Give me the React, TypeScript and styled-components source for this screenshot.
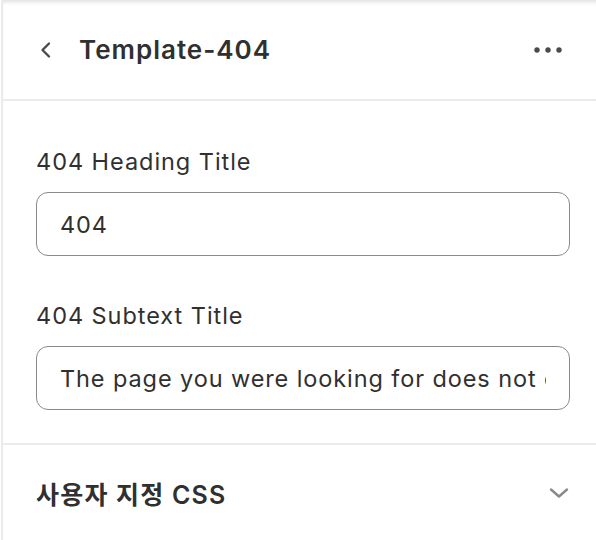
import styled, { createGlobalStyle } from 'styled-components';

const GlobalStyle = createGlobalStyle`
  html, body {
    margin: 0;
    padding: 0;
    background: #ffffff;
  }
  body {
    font-family: Inter, "Noto Sans CJK KR", sans-serif;
    color: #303030;
  }
`;

const Panel = styled.div`
  width: 596px;
  height: 540px;
  box-sizing: border-box;
  margin-left: 1px;
  border-left: 2px solid #ebebeb;
  display: flex;
  flex-direction: column;
  overflow: hidden;
`;

const Header = styled.header`
  height: 99px;
  flex-shrink: 0;
  display: flex;
  align-items: center;
  padding: 0 35px 0 32px;
  border-bottom: 2px solid #ebebeb;
  box-shadow: inset 0 4px 4px -2px rgba(0, 0, 0, 0.13);
`;

const IconButton = styled.button`
  border: none;
  background: none;
  padding: 0;
  display: flex;
  align-items: center;
  justify-content: center;
  color: #4a4a4a;
  cursor: pointer;
`;

const Title = styled.h1`
  margin: 0 0 0 22px;
  flex: 1;
  font-size: 26px;
  font-weight: 600;
  letter-spacing: 1px;
  color: #303030;
`;

const Fields = styled.div`
  display: flex;
  flex-direction: column;
  gap: 44px;
  padding: 45px 27px 33px 33px;
  border-bottom: 2px solid #ebebeb;
`;

const Field = styled.label`
  display: flex;
  flex-direction: column;
  gap: 14px;
`;

const LabelText = styled.span`
  font-size: 23.5px;
  line-height: 32px;
  letter-spacing: 0.95px;
  color: #303030;
`;

const TextInput = styled.input`
  box-sizing: border-box;
  height: 64px;
  width: 100%;
  border: 1px solid #8a8a8a;
  border-radius: 12px;
  padding: 0 23px;
  font-family: inherit;
  font-size: 23.5px;
  letter-spacing: 0.9px;
  color: #303030;
  background: #fff;
  outline: none;
`;

const Section = styled.div`
  flex: 1;
  display: flex;
  align-items: center;
  justify-content: space-between;
  padding: 0 27px 0 33px;
`;

const SectionTitle = styled.h2`
  margin: 0;
  font-size: 25px;
  font-weight: 600;
  letter-spacing: 1.2px;
  color: #303030;
`;

export default function App() {
  return (
    <>
      <GlobalStyle />
      <Panel>
        <Header>
          <IconButton aria-label="Back">
            <svg width="22" height="22" viewBox="0 0 22 22" fill="none">
              <path d="M14 4.5 L7.5 11 L14 17.5" stroke="currentColor" strokeWidth="2.4" strokeLinecap="round" strokeLinejoin="round" />
            </svg>
          </IconButton>
          <Title>Template-404</Title>
          <IconButton aria-label="More">
            <svg width="28" height="8" viewBox="0 0 28 8" fill="currentColor">
              <circle cx="3" cy="4" r="2.7" />
              <circle cx="14" cy="4" r="2.7" />
              <circle cx="25" cy="4" r="2.7" />
            </svg>
          </IconButton>
        </Header>
        <Fields>
          <Field>
            <LabelText>404 Heading Title</LabelText>
            <TextInput defaultValue="404" />
          </Field>
          <Field>
            <LabelText>404 Subtext Title</LabelText>
            <TextInput defaultValue="The page you were looking for does not exist" />
          </Field>
        </Fields>
        <Section>
          <SectionTitle>사용자 지정 CSS</SectionTitle>
          <IconButton aria-label="Expand">
            <svg width="22" height="14" viewBox="0 0 22 14" fill="none">
              <path d="M3 3.5 L11 10.5 L19 3.5" stroke="#8a8a8a" strokeWidth="2.4" strokeLinecap="round" strokeLinejoin="round" />
            </svg>
          </IconButton>
        </Section>
      </Panel>
    </>
  );
}
